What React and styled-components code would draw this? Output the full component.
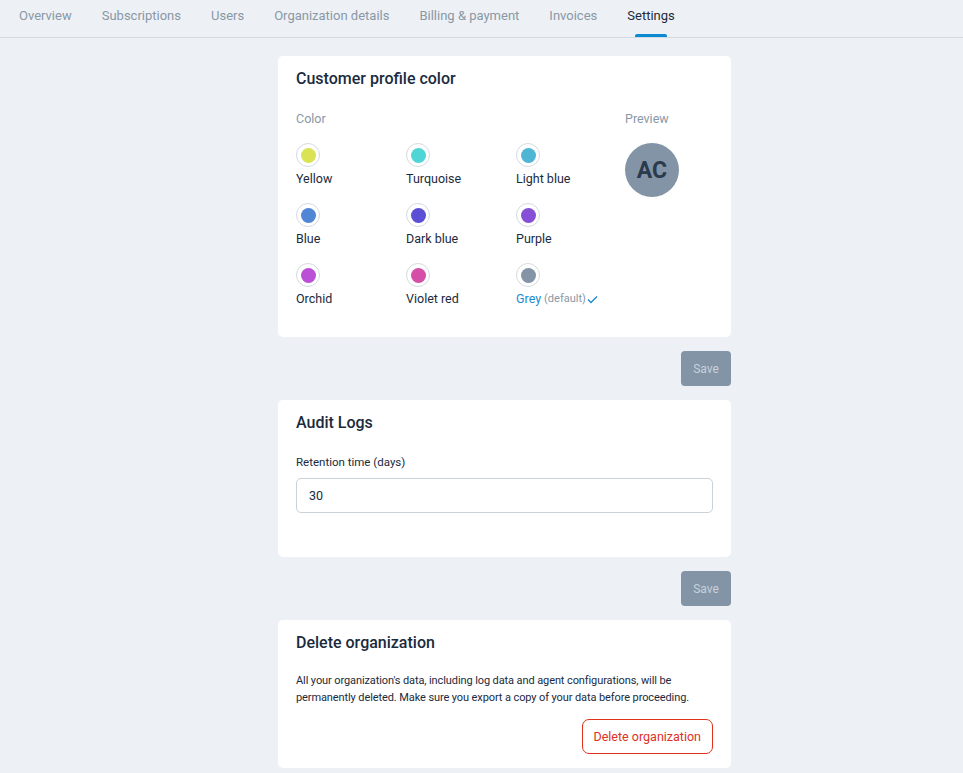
import React from "react";
import styled, { createGlobalStyle } from "styled-components";

const GlobalStyle = createGlobalStyle`
  body {
    margin: 0;
    background: #edf1f5;
    font-family: Roboto, "Liberation Sans", sans-serif;
    color: #1b2a3d;
  }
`;

const TabBar = styled.nav`
  display: flex;
  height: 37px;
  padding-left: 4px;
  border-bottom: 1px solid #d3dae1;
`;

const Tab = styled.div`
  position: relative;
  padding: 0 15px;
  line-height: 32px;
  font-size: 13px;
  color: ${(p) => (p.$active ? "#1b2a3d" : "#8a97a5")};

  &::after {
    content: "";
    display: ${(p) => (p.$active ? "block" : "none")};
    position: absolute;
    left: 50%;
    bottom: 0;
    width: 32px;
    margin-left: -16px;
    height: 3px;
    border-radius: 2px 2px 0 0;
    background: #0a8ad0;
  }
`;

const Column = styled.main`
  width: 453px;
  margin: 18px 0 0 278px;
  display: flex;
  flex-direction: column;
  gap: 14px;
`;

const Card = styled.section`
  background: #fff;
  border-radius: 5px;
  padding: 12px 18px ${(p) => p.$bottom || 14}px;
`;

const CardTitle = styled.h2`
  margin: 0;
  font-size: 16px;
  line-height: 22px;
  font-weight: 500;
  color: #1b2a3d;
`;

const ColorLayout = styled.div`
  display: flex;
  margin-top: 20px;
`;

const ColorPicker = styled.div`
  width: 330px;
`;

const Muted = styled.div`
  font-size: 12.5px;
  line-height: 18px;
  color: #8a97a5;
`;

const SwatchGrid = styled.div`
  display: grid;
  grid-template-columns: repeat(3, 110px);
  row-gap: 15px;
  margin-top: 15px;
`;

const Swatch = styled.div`
  display: flex;
  flex-direction: column;
  align-items: flex-start;
  gap: 3px;
`;

const Ring = styled.span`
  width: 24px;
  height: 24px;
  box-sizing: border-box;
  border-radius: 50%;
  border: 1.5px solid #d3dae2;
  background: #fff;
  display: flex;
  align-items: center;
  justify-content: center;

  &::before {
    content: "";
    width: 15px;
    height: 15px;
    border-radius: 50%;
    background: ${(p) => p.$color};
  }
`;

const SwatchLabel = styled.span`
  font-size: 12.5px;
  line-height: 18px;
  color: ${(p) => (p.$selected ? "#1d8ad0" : "#1b2a3d")};
  display: flex;
  align-items: center;
`;

const DefaultNote = styled.span`
  font-size: 11px;
  color: #8a97a5;
  margin-left: 3px;
`;

const PreviewCol = styled.div`
  margin-left: -1px;
`;

const Avatar = styled.div`
  margin-top: 15px;
  width: 54px;
  height: 54px;
  border-radius: 50%;
  background: #8294a6;
  color: #2b3a4d;
  font-size: 23px;
  font-weight: 700;
  display: flex;
  align-items: center;
  justify-content: center;
`;

const ActionRow = styled.div`
  display: flex;
  justify-content: flex-end;
`;

const SaveButton = styled.button`
  width: 50px;
  height: 35px;
  border: none;
  border-radius: 4px;
  background: #8294a6;
  color: #c8d1da;
  font-family: inherit;
  font-size: 12px;
`;

const FieldLabel = styled.label`
  display: block;
  margin-top: 20px;
  font-size: 11.5px;
  line-height: 16px;
  color: #1b2a3d;
`;

const Input = styled.input`
  display: block;
  box-sizing: border-box;
  width: 100%;
  height: 35px;
  margin-top: 8px;
  padding: 0 12px;
  border: 1px solid #c9d1d9;
  border-radius: 5px;
  font-family: inherit;
  font-size: 12.5px;
  color: #1b2a3d;
  outline: none;
`;

const Paragraph = styled.p`
  margin: 18px 0 0;
  font-size: 11px;
  letter-spacing: -0.1px;
  line-height: 17px;
  color: #1b2a3d;
`;

const DangerButton = styled.button`
  margin-top: 13px;
  height: 35px;
  padding: 0 11px;
  border: 1px solid #e0301e;
  border-radius: 7px;
  background: #fff;
  color: #e0301e;
  font-family: inherit;
  font-size: 12.5px;
`;

const tabs = [
  "Overview",
  "Subscriptions",
  "Users",
  "Organization details",
  "Billing & payment",
  "Invoices",
  "Settings",
];

const colors = [
  ["Yellow", "#d9e354"],
  ["Turquoise", "#4fd5d5"],
  ["Light blue", "#4fb5d5"],
  ["Blue", "#4f86d5"],
  ["Dark blue", "#5b4fd5"],
  ["Purple", "#874fd5"],
  ["Orchid", "#bb4fd5"],
  ["Violet red", "#d54fa8"],
  ["Grey", "#8294a6"],
];

function Check() {
  return (
    <svg width="11" height="9" viewBox="0 0 11 9" style={{ marginLeft: 1 }}>
      <path d="M1 4.5 L4 7.5 L10 1.5" fill="none" stroke="#1d8ad0" strokeWidth="1.4" />
    </svg>
  );
}

export default function App() {
  return (
    <>
      <GlobalStyle />
      <TabBar>
        {tabs.map((t) => (
          <Tab key={t} $active={t === "Settings"}>
            {t}
          </Tab>
        ))}
      </TabBar>
      <Column>
        <Card $bottom={29}>
          <CardTitle>Customer profile color</CardTitle>
          <ColorLayout>
            <ColorPicker>
              <Muted>Color</Muted>
              <SwatchGrid>
                {colors.map(([name, c]) => {
                  const selected = name === "Grey";
                  return (
                    <Swatch key={name}>
                      <Ring $color={c} />
                      <SwatchLabel $selected={selected}>
                        {name}
                        {selected && (
                          <>
                            <DefaultNote>(default)</DefaultNote>
                            <Check />
                          </>
                        )}
                      </SwatchLabel>
                    </Swatch>
                  );
                })}
              </SwatchGrid>
            </ColorPicker>
            <PreviewCol>
              <Muted>Preview</Muted>
              <Avatar>AC</Avatar>
            </PreviewCol>
          </ColorLayout>
        </Card>
        <ActionRow>
          <SaveButton>Save</SaveButton>
        </ActionRow>
        <Card $bottom={44}>
          <CardTitle>Audit Logs</CardTitle>
          <FieldLabel>Retention time (days)</FieldLabel>
          <Input defaultValue="30" />
        </Card>
        <ActionRow>
          <SaveButton>Save</SaveButton>
        </ActionRow>
        <Card>
          <CardTitle>Delete organization</CardTitle>
          <Paragraph>
            All your organization's data, including log data and agent configurations, will be
            permanently deleted. Make sure you export a copy of your data before proceeding.
          </Paragraph>
          <ActionRow>
            <DangerButton>Delete organization</DangerButton>
          </ActionRow>
        </Card>
      </Column>
    </>
  );
}
